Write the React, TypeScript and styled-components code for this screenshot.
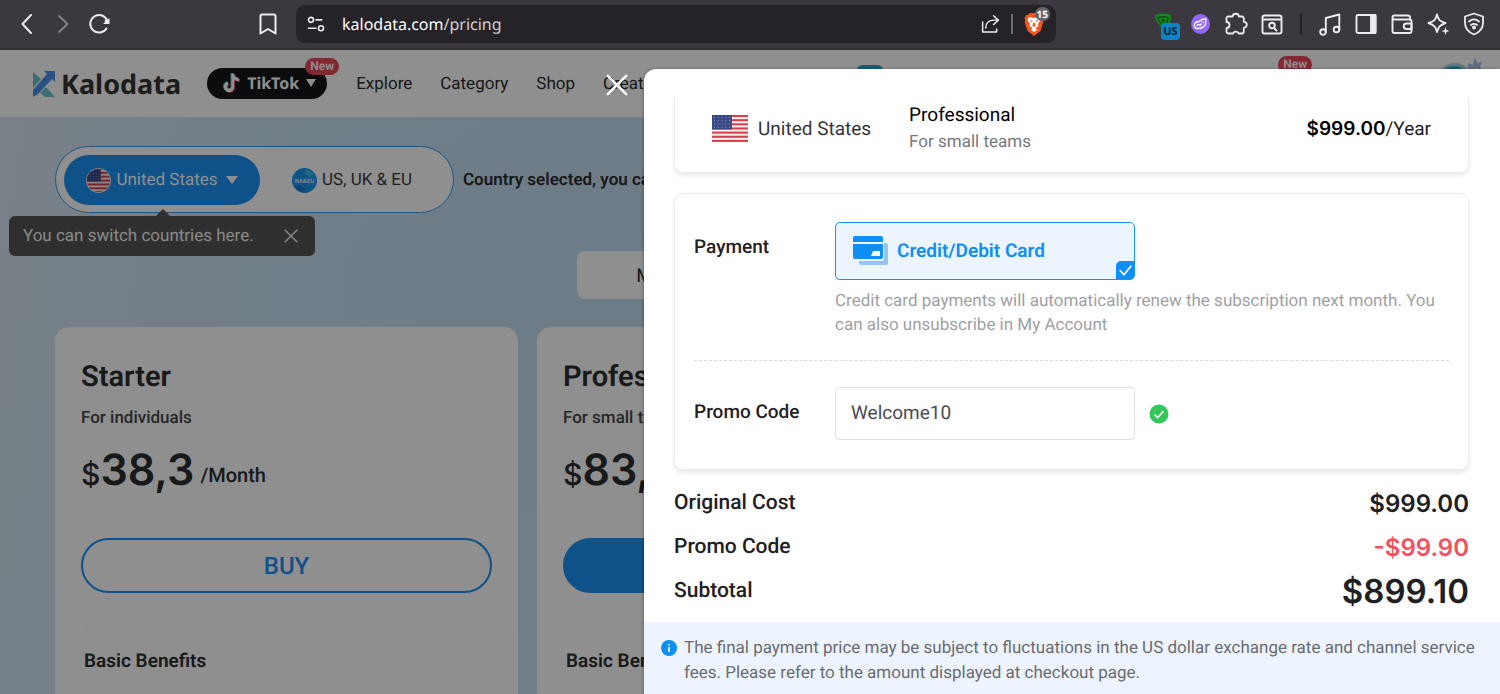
import React from 'react';
import styled, { createGlobalStyle } from 'styled-components';

const Global = createGlobalStyle`
  * { box-sizing: border-box; }
  body { margin: 0; background: #fff; font-family: Roboto, "Liberation Sans", sans-serif; color: #2b2d30; text-rendering: geometricPrecision; }
  button, input { font: inherit; color: inherit; text-rendering: inherit; }
  button { border: 0; padding: 0; background: none; cursor: pointer; }
  a { color: inherit; text-decoration: none; }
  h2, h3, p { margin: 0; }
  svg { display: block; flex: none; }
`;

const Screen = styled.div`
  display: flex;
  flex-direction: column;
  height: 100vh;
`;

/* ---------- browser bar ---------- */

const BrowserBar = styled.div`
  display: flex;
  flex: none;
  align-items: center;
  height: 50px;
  padding: 0 14px 0 16px;
  background: #3b393f;
  border-bottom: 2px solid #333136;
  color: #ececee;
`;

const IconButton = styled.button<{ $dim?: boolean }>`
  display: flex;
  align-items: center;
  justify-content: center;
  width: 24px;
  height: 24px;
  color: ${p => (p.$dim ? '#858388' : 'inherit')};
`;

const NavGroup = styled.div`
  display: flex;
  gap: 12px;
  flex: none;
  width: 240px;
`;

const AddressBar = styled.form`
  display: flex;
  align-items: center;
  width: 760px;
  height: 38px;
  margin-left: 16px;
  padding: 0 10px 0 8px;
  border-radius: 9px;
  background: #252328;
`;

const AddressText = styled.div`
  flex: 1;
  margin-left: 14px;
  font: 16px/24px "Noto Sans", sans-serif;
  color: #d2d1d4;
  b { font-weight: 400; color: #fff; }
`;

const BarRule = styled.span<{ $dark?: boolean }>`
  width: 2px;
  height: 20px;
  margin: 0 ${p => (p.$dark ? '4px' : '9px')};
  background: ${p => (p.$dark ? '#232126' : '#6f6d73')};
`;

const ExtensionGroup = styled.div`
  display: flex;
  align-items: center;
  gap: 12px;
  margin-left: auto;
`;

const Badged = styled.span`
  position: relative;
  display: flex;
`;

const ShieldCount = styled.span`
  position: absolute;
  top: -5px;
  right: -6px;
  padding: 0 2px;
  border-radius: 7px;
  background: #66646f;
  color: #fff;
  font: 700 10px/14px "Noto Sans", sans-serif;
`;

const RegionTag = styled.span`
  position: absolute;
  top: 12px;
  left: 7px;
  width: 19px;
  border-radius: 4px;
  background: #0a84c4;
  color: #10202c;
  text-align: center;
  font: 700 11px/17px "Noto Sans", sans-serif;
`;

/* ---------- page ---------- */

const Viewport = styled.div`
  position: relative;
  flex: 1;
  min-height: 0;
  overflow: hidden;
`;

const Page = styled.div`
  height: 100%;
  display: flex;
  flex-direction: column;
  background: radial-gradient(ellipse 700px 420px at 50% 40%, #c3dcf0, transparent), linear-gradient(100deg, #d7e6f0 0%, #cae2f4 20%, #c5e2f5 100%);
`;

const Header = styled.header`
  display: flex;
  flex: none;
  align-items: center;
  height: 67px;
  padding: 0 17px 0 32px;
  background: #fff;
  font-size: 17px;
`;

const Logo = styled.a`
  display: flex;
  align-items: center;
  gap: 5px;
  color: #333;
  font: 700 27px/40px "Noto Sans", sans-serif;
`;

const PlatformButton = styled.button`
  position: relative;
  display: flex;
  align-items: center;
  gap: 7px;
  width: 120px;
  height: 31px;
  margin-left: 26px;
  padding: 0 0 2px 15px;
  border-radius: 16px;
  background: #16171b;
  color: #fff;
  font: 700 16px/24px "Noto Sans", sans-serif;
`;

const NewBadge = styled.span`
  padding: 0 5px;
  border-radius: 9px;
  background: #e8485c;
  color: #fff;
  font: 600 12px/17px Roboto, sans-serif;
`;

const PlatformBadge = styled(NewBadge)`
  position: absolute;
  top: -10px;
  right: -12px;
`;

const NavLinks = styled.nav`
  display: flex;
  gap: 28px;
  margin-left: 29px;
`;

const HeaderEnd = styled.div`
  display: flex;
  align-items: flex-start;
  gap: 125px;
  align-self: flex-start;
  margin-left: auto;
  padding-top: 6px;
`;

const TopChip = styled.span`
  width: 28px;
  height: 14px;
  margin: 9px 269px 0 0;
  border-radius: 7px;
  background: #22a7d4;
`;

const Body = styled.div`
  flex: 1;
  display: flex;
  flex-direction: column;
  padding: 29px 54px 0 55px;
`;

const CountryRow = styled.div`
  display: flex;
  align-items: center;
  gap: 9px;
  font-size: 17px;
`;

const CountryTabs = styled.div`
  position: relative;
  display: flex;
  width: 399px;
  height: 67px;
  padding: 8px;
  border: 1px solid #2f9bf5;
  border-radius: 34px;
  background: #fff;
`;

const CountryTab = styled.button<{ $active?: boolean }>`
  display: flex;
  align-items: center;
  justify-content: center;
  gap: 5px;
  width: ${p => (p.$active ? '196px' : '184px')};
  height: 50px;
  border-radius: 25px;
  background: ${p => (p.$active ? '#1c92f5' : 'transparent')};
  color: ${p => (p.$active ? '#fff' : '#3c3d40')};
`;

const TabCaret = styled.span`
  margin-left: 3px;
`;

const CountryNote = styled.strong`
  font-weight: 600;
  white-space: nowrap;
`;

const Tooltip = styled.div`
  position: absolute;
  top: 69px;
  left: -47px;
  display: flex;
  align-items: center;
  justify-content: space-between;
  width: 306px;
  height: 40px;
  padding: 0 12px 0 14px;
  border-radius: 6px;
  background: #555;
  color: #f3f3f3;
  &::before {
    content: '';
    position: absolute;
    top: -7px;
    left: 147px;
    border: solid transparent;
    border-width: 0 7px 7px;
    border-bottom-color: #555;
  }
`;

const PeriodRow = styled.div`
  display: flex;
  justify-content: center;
  margin-top: 38px;
`;

const PeriodTab = styled.button`
  width: 174px;
  height: 48px;
  border-radius: 8px;
  background: #fff;
  font-size: 19px;
`;

const Plans = styled.div`
  flex: 1;
  display: grid;
  grid-template-columns: repeat(3, 463px);
  gap: 19px;
  margin-top: 28px;
`;

const PlanCard = styled.section`
  padding: 35px 26px 0;
  border-radius: 14px 14px 0 0;
  background: #fff;
  display: flex;
  flex-direction: column;
`;

const PlanName = styled.h2`
  font-size: 29px;
  line-height: 30px;
  font-weight: 600;
`;

const PlanFor = styled.p`
  margin-top: 14px;
  font-size: 17px;
  line-height: 24px;
  font-weight: 500;
  color: #45464a;
`;

const PlanPrice = styled.p`
  display: flex;
  align-items: center;
  gap: 6px;
  height: 60px;
  margin-top: 12px;
`;

const Amount = styled.span`
  font: 600 43px/60px Inter, sans-serif;
`;

const Currency = styled.span`
  font-size: 30px;
  font-weight: 500;
`;

const Per = styled.span`
  padding-top: 6px;
  font-size: 20px;
  font-weight: 500;
`;

const BuyButton = styled.button<{ $filled?: boolean }>`
  height: 55px;
  margin-top: 36px;
  border: 2px solid #1c92f5;
  border-radius: 28px;
  background: ${p => (p.$filled ? '#1c92f5' : 'transparent')};
  color: ${p => (p.$filled ? '#fff' : '#1c92f5')};
  font-size: 24px;
  font-weight: 500;
`;

const Benefits = styled.h3`
  margin: 36px 3px 0;
  padding-top: 20px;
  border-top: 1px solid #f3f3f3;
  font-size: 19px;
  line-height: 22px;
  font-weight: 600;
`;

/* ---------- drawer ---------- */

const Mask = styled.div`
  position: absolute;
  inset: 0;
  background: rgba(0, 0, 0, 0.44);
`;

const Drawer = styled.aside`
  position: absolute;
  top: 19px;
  right: 0;
  bottom: 0;
  width: 856px;
  display: flex;
  flex-direction: column;
  padding-top: 28px;
  border-top-left-radius: 12px;
  background: #fff;
  box-shadow: -1px 0 3px rgba(0, 0, 0, 0.25);
  color: #1f2023;
`;

const CloseButton = styled.button`
  position: absolute;
  top: 5px;
  left: -38px;
  color: #fff;
`;

const DrawerBody = styled.div`
  flex: 1;
  padding: 0 31px 0 30px;
`;

const Card = styled.section`
  border: 1px solid #ededee;
  border-radius: 9px;
  box-shadow: 0 3px 5px rgba(0, 0, 0, 0.09);
`;

const SummaryCard = styled(Card)`
  display: flex;
  align-items: center;
  height: 76px;
  padding: 0 37px 12px;
  border-top: 0;
  border-radius: 0 0 9px 9px;
  font-size: 19px;
`;

const SummaryCountry = styled.span`
  margin: 0 38px 0 10px;
  color: #35363a;
`;

const SummaryPlan = styled.div`
  flex: 1;
  line-height: 26px;
  color: #000;
  p { font-size: 17px; line-height: 28px; color: #77787b; }
`;

const SummaryPrice = styled.div`
  b { font: 600 19px/26px Inter, sans-serif; color: #000; }
`;

const PaymentCard = styled(Card)`
  margin-top: 20px;
  padding: 28px 19px 29px;
`;

const FieldRow = styled.div<{ $divided?: boolean }>`
  display: grid;
  grid-template-columns: 141px 1fr;
  font-size: 19px;
  ${p => p.$divided && 'padding-bottom: 23px; margin-bottom: 26px; border-bottom: 1px dashed #d9d9d9;'}
`;

const FieldLabel = styled.label`
  line-height: 50px;
  font-weight: 500;
`;

const MethodButton = styled.button`
  position: relative;
  display: flex;
  align-items: center;
  gap: 8px;
  width: 300px;
  height: 58px;
  padding: 0 0 2px 17px;
  border: 1px solid #1592f5;
  border-radius: 5px;
  background: #ecf4fd;
  color: #0d8ff5;
  font-weight: 600;
`;

const MethodTick = styled.span`
  position: absolute;
  right: 0;
  bottom: 0;
  display: flex;
  padding: 3px 2px 2px 3px;
  border-radius: 5px 0 3px 0;
  background: #0d8ff5;
  color: #fff;
`;

const Hint = styled.p`
  margin-top: 9px;
  color: #a0a1a3;
  font-size: 17px;
  line-height: 24px;
`;

const PromoField = styled.div`
  display: flex;
  align-items: center;
  gap: 14px;
`;

const PromoInput = styled.input`
  width: 300px;
  height: 53px;
  padding: 0 15px 2px;
  border: 1px solid #e0e0e2;
  border-radius: 4px;
  outline: 0;
  background: #fff;
  color: #4b4c50;
`;

const Totals = styled.dl`
  margin: 11px 0 0;
`;

const TotalRow = styled.div`
  display: flex;
  align-items: center;
  justify-content: space-between;
  height: 44px;
`;

const TotalName = styled.dt`
  font-size: 21px;
  font-weight: 500;
`;

const TotalValue = styled.dd<{ $tone?: 'discount' | 'total' }>`
  margin: 0;
  font-family: Inter, sans-serif;
  font-size: ${p => (p.$tone === 'total' ? '33px' : '24px')};
  font-weight: 600;
  color: ${p => (p.$tone === 'discount' ? '#f4505f' : 'inherit')};
`;

const Notice = styled.footer`
  display: flex;
  gap: 7px;
  height: 72px;
  padding: 14px 22px 8px 17px;
  background: #edf4fd;
  color: #6a6c70;
  font-size: 17px;
  line-height: 25px;
  svg { margin-top: 4px; }
`;

/* ---------- drawings ---------- */

const Icon = ({ size = 24, w = 2, children }: { size?: number; w?: number; children: React.ReactNode }) => (
  <svg width={size} height={size} viewBox="0 0 24 24" fill="none" stroke="currentColor" strokeWidth={w} strokeLinecap="round" strokeLinejoin="round">
    {children}
  </svg>
);

const FlagArt = () => (
  <>
    <rect width="38" height="28" fill="#fbf0f0" />
    {[0, 1, 2, 3, 4, 5, 6].map(i => (
      <rect key={i} y={i * 4.3} width="38" height="2.15" fill="#d2424e" />
    ))}
    <rect width="21" height="15" fill="#3a4a86" />
    {[0, 1, 2, 3].map(r => [0, 1, 2, 3, 4].map(c => (
      <circle key={`${r}${c}`} cx={2.6 + c * 4} cy={2.4 + r * 3.4} r="0.6" fill="#8f9ac4" />
    )))}
  </>
);

const Flag = () => (
  <svg width="36" height="27" viewBox="0 0 38 28" preserveAspectRatio="none" aria-hidden="true">
    <FlagArt />
  </svg>
);

const RoundFlag = () => (
  <svg width="25" height="25" viewBox="0 0 25 25" aria-hidden="true">
    <clipPath id="round"><circle cx="12.5" cy="12.5" r="11.6" /></clipPath>
    <circle cx="12.5" cy="12.5" r="12.5" fill="#e8e4e6" />
    <g clipPath="url(#round)"><g transform="scale(0.7 0.9)"><FlagArt /></g></g>
  </svg>
);

const Globe = () => (
  <svg width="25" height="25" viewBox="0 0 25 25" aria-hidden="true">
    <circle cx="12.5" cy="12.5" r="12.5" fill="#1e95ee" />
    <path d="M13 2c4-1 8 2 9 5l-4 2-5-3z" fill="#35bfe0" />
    <path d="M3 18l6-1 4 4-3 3C7 23 4 21 3 18z" fill="#1878cc" />
    <text x="12.5" y="15" fontSize="6" fontWeight="700" textAnchor="middle" fill="#d6ecff">NA&amp;EU</text>
  </svg>
);

const KaloMark = () => (
  <svg width="24" height="26" viewBox="0 0 24 26" aria-hidden="true">
    <path d="M1 1l8 7-8 9z" fill="#6cc3cc" />
    <path d="M14 16l9 10H13l-5-4z" fill="#6cc3cc" />
    <path d="M12 0h11v11l-3-3L6 23l-5 3v-7L15 3z" fill="#4a90e8" />
  </svg>
);

const TikTokMark = () => {
  const note = 'M9 0h3c.3 2.700 2 4.500 5 4.700v3.300c-2 0-3.600-.6-5-1.500v7.500a5.500 5.500 0 1 1-6.500-5.400v3.400a2.200 2.200 0 1 0 3.500 1.800z';
  return (
    <svg width="18" height="20" viewBox="0 0 19 21" aria-hidden="true">
      <path d={note} fill="#2de0dc" />
      <path d={note} fill="#f5305a" transform="translate(1.800 1.400)" />
      <path d={note} fill="#fff" transform="translate(0.900 0.700)" />
    </svg>
  );
};

const Caret = ({ w = 10 }: { w?: number }) => (
  <svg width={w} height="8" viewBox="0 0 10 8" preserveAspectRatio="none" aria-hidden="true"><path d="M0 0h10L5 8z" fill="currentColor" /></svg>
);

const CreditCardArt = () => (
  <svg width="36" height="29" viewBox="0 0 36 29" aria-hidden="true">
    <rect x="6" y="7" width="29" height="22" rx="2" fill="#95c3f2" />
    <rect width="31" height="25" rx="2" fill="#ecf4fd" />
    <path d="M2 0h26a2 2 0 0 1 2 2v4H0V2a2 2 0 0 1 2-2zM0 8h30v13a2 2 0 0 1-2 2H2a2 2 0 0 1-2-2z" fill="#0d8ff5" />
    <path d="M20 15h7v5h-9z" fill="#fff" />
  </svg>
);

const BraveLion = () => (
  <svg width="20" height="24" viewBox="0 0 20 24" aria-hidden="true">
    <path d="M6 1h8l2 2 2 0 1.500 3-.7 2 .5 2-2.800 9L10 24l-6.500-5L.7 10l.5-2L.5 6 2 3h2z" fill="#f1561d" />
    <path d="M5 5l5 1 5-1 1.500 3-2.500 4 .5 2-3 2 1.500 2L10 20l-3-2 1.500-2-3-2 .5-2-2.500-4z" fill="#fff" />
    <path d="M6 8l3 1-2 1zM14 8l-3 1 2 1zM9 11h2l.5 3-1.500 1-1.500-1z" fill="#f1561d" />
  </svg>
);

const GreenShield = () => (
  <svg width="20" height="26" viewBox="0 0 20 26" aria-hidden="true">
    <path d="M1 4q8-3 16 0 .5 9-6 15Q2 13 1 4z" fill="#128a1c" />
    <path d="M4 6.500q5-1.500 10 0 0 5-4 9Q5 12 4 6.500z" fill="none" stroke="#0b4a12" strokeWidth="1.300" />
    <path d="M7 9l4-1-1 4z" fill="#0b3c10" />
  </svg>
);

const PurpleOrb = () => (
  <svg width="19" height="20" viewBox="0 0 19 20" aria-hidden="true">
    <ellipse cx="9.500" cy="10" rx="9.500" ry="10" fill="#9468f6" />
    <g fill="none" stroke="#fff" strokeWidth="1.300" strokeLinejoin="round" strokeLinecap="round">
      <path d="M4 9c1-1.500 4-1 5-2s3-2.500 6-2c0 2-.5 3-.5 5-1 3-4 4.500-8 4.500C3.500 14.500 2.500 12 4 9z" />
      <path d="M6 11.500c.5-1.500 2-1.500 2.500-.5s1.500 0 2-1.500M12 8h.5" />
    </g>
  </svg>
);

const AvatarArt = () => (
  <svg width="46" height="30" viewBox="0 0 46 30" aria-hidden="true">
    <path d="M31 14l0-7 5 2 2-8 2 6 5-1-2 5 3 4z" fill="#aebfdf" />
    <circle cx="18" cy="25" r="18" fill="#b3cfe4" />
    <circle cx="17" cy="25" r="15" fill="#1fb3c8" />
  </svg>
);

const plans = [
  { name: 'Starter', target: 'For individuals', price: '38,3' },
  { name: 'Professional', target: 'For small teams', price: '83,2', filled: true },
];

export default function App() {
  return (
    <Screen>
      <Global />
      <BrowserBar>
        <NavGroup>
          <IconButton aria-label="Back"><Icon><path d="M15 3L6.500 12 15 21" /></Icon></IconButton>
          <IconButton aria-label="Forward" $dim><Icon w={1.800}><path d="M7 4l8.500 8L7 20" /></Icon></IconButton>
          <IconButton aria-label="Reload">
            <Icon><path d="M18.500 16.500A8.800 8.800 0 1 1 19 8" /><path d="M15 12h6.500V6z" fill="currentColor" stroke="none" /><circle cx="18.800" cy="9.500" r="2.200" fill="currentColor" stroke="none" /></Icon>
          </IconButton>
        </NavGroup>
        <IconButton aria-label="Bookmark"><Icon><path d="M6 2.500h12a1.500 1.500 0 0 1 1.500 1.500v17.500l-7.500-4.500-7.500 4.500V4A1.500 1.500 0 0 1 6 2.500z" /></Icon></IconButton>
        <AddressBar>
          <IconButton type="button" aria-label="Site settings">
            <Icon size={20} w={1.900}><circle cx="6" cy="7" r="3" /><path d="M12 7h7M3 17h9" /><circle cx="18" cy="17" r="3" /></Icon>
          </IconButton>
          <AddressText><b>kalodata.com</b>/pricing</AddressText>
          <IconButton type="button" aria-label="Share">
            <Icon size={21} w={1.700}><path d="M3 9v11.500h16V17M6.500 16c0-6 4-9 10-9h4M15.500 2l5.500 5-5.500 5" /></Icon>
          </IconButton>
          <BarRule />
          <IconButton type="button" aria-label="Shields">
            <Badged><BraveLion /><ShieldCount>15</ShieldCount></Badged>
          </IconButton>
        </AddressBar>
        <ExtensionGroup>
          <IconButton aria-label="VPN extension"><Badged><GreenShield /><RegionTag>US</RegionTag></Badged></IconButton>
          <IconButton aria-label="Orb extension"><PurpleOrb /></IconButton>
          <IconButton aria-label="Extensions">
            <Icon w={1.800}><path d="M4.500 4.500H8.500a3.300 3.300 0 0 1 6.500 0H18a1.800 1.800 0 0 1 1.800 1.800v3.500a3 3 0 0 1 0 6v3.700a2 2 0 0 1-2 2h-3.300a2.900 2.900 0 0 0-5.400 0H4.500a2 2 0 0 1-2-2v-3.500a3 3 0 0 0 0-6V6.300A1.800 1.800 0 0 1 4.500 4.500z" /></Icon>
          </IconButton>
          <IconButton aria-label="Search tabs">
            <Icon w={1.900}><rect x="2.500" y="3.500" width="19" height="18" rx="2" /><path d="M3 7.500h18M14 16l2.500 2.500" /><circle cx="12" cy="13.500" r="2.800" /></Icon>
          </IconButton>
          <BarRule $dark />
          <IconButton aria-label="Playlist">
            <Icon w={1.900}><circle cx="5" cy="20" r="2.800" /><circle cx="18.500" cy="17.500" r="2.800" /><path d="M7.800 20V6l13.500-3.500v15" /></Icon>
          </IconButton>
          <IconButton aria-label="Sidebar">
            <Icon w={1.900}><rect x="2.500" y="3" width="19" height="18" rx="1.500" /><path d="M17 3h4.500v18H17z" fill="currentColor" /></Icon>
          </IconButton>
          <IconButton aria-label="Wallet">
            <Icon w={1.900}><path d="M20 7V5.500a2 2 0 0 0-2-2H4.500a2 2 0 0 0 0 4H19.500a2 2 0 0 1 2 2V19a2 2 0 0 1-2 2H4.500a2 2 0 0 1-2-2V5.500" /><path d="M21.500 11.500h-5a2.700 2.700 0 0 0 0 5.500h5z" /></Icon>
          </IconButton>
          <IconButton aria-label="Assistant">
            <Icon w={1.900}><path d="M11 2.500c1 5 3 7 8.500 8.500-3 1-5 2-6.500 4l-2 5c-1-5-3-7-8.500-9 5.500-1.500 7.500-3.500 8.500-8.500z" /><path d="M19.500 15l1 3 3 1-3 1-1 3-1-3-3-1 3-1z" fill="currentColor" stroke="none" /></Icon>
          </IconButton>
          <IconButton aria-label="Brave VPN">
            <Icon w={1.800}><path d="M12 1.500l9 3v6.500c0 6-4 9.500-9 11.500-5-2-9-5.500-9-11.500V4.500z" /><path d="M7 9.500c3-2.500 7-2.500 10 0M9 13c2-1.500 4-1.500 6 0" /><circle cx="12" cy="15.500" r="1" fill="currentColor" /></Icon>
          </IconButton>
        </ExtensionGroup>
      </BrowserBar>

      <Viewport>
        <Page>
          <Header>
            <Logo href="#"><KaloMark />Kalodata</Logo>
            <PlatformButton>
              <TikTokMark />TikTok<Caret />
              <PlatformBadge>New</PlatformBadge>
            </PlatformButton>
            <NavLinks>
              <a href="#">Explore</a>
              <a href="#">Category</a>
              <a href="#">Shop</a>
              <a href="#">Creator</a>
            </NavLinks>
            <HeaderEnd>
              <TopChip />
              <NewBadge>New</NewBadge>
              <AvatarArt />
            </HeaderEnd>
          </Header>
          <Body>
            <CountryRow>
              <CountryTabs>
                <CountryTab $active><RoundFlag />United States<TabCaret><Caret w={12} /></TabCaret></CountryTab>
                <CountryTab><Globe />US, UK &amp; EU</CountryTab>
                <Tooltip role="tooltip">
                  You can switch countries here.
                  <IconButton aria-label="Dismiss"><Icon size={20} w={1.800}><path d="M5 5l14 14M19 5L5 19" /></Icon></IconButton>
                </Tooltip>
              </CountryTabs>
              <CountryNote>Country selected, you can</CountryNote>
            </CountryRow>
            <PeriodRow>
              <PeriodTab>Month</PeriodTab>
              <PeriodTab>Year</PeriodTab>
            </PeriodRow>
            <Plans>
              {plans.map(p => (
                <PlanCard key={p.name}>
                  <PlanName>{p.name}</PlanName>
                  <PlanFor>{p.target}</PlanFor>
                  <PlanPrice><Amount><Currency>$</Currency>{p.price}</Amount><Per>/Month</Per></PlanPrice>
                  <BuyButton $filled={p.filled}>BUY</BuyButton>
                  <Benefits>Basic Benefits</Benefits>
                </PlanCard>
              ))}
            </Plans>
          </Body>
        </Page>

        <Mask />
        <Drawer>
          <CloseButton aria-label="Close"><Icon size={22} w={2.600}><path d="M2 2l20 20M22 2L2 22" /></Icon></CloseButton>
          <DrawerBody>
            <SummaryCard>
              <Flag />
              <SummaryCountry>United States</SummaryCountry>
              <SummaryPlan>Professional<p>For small teams</p></SummaryPlan>
              <SummaryPrice><b>$999.00</b>/Year</SummaryPrice>
            </SummaryCard>
            <PaymentCard>
              <FieldRow $divided>
                <FieldLabel htmlFor="method">Payment</FieldLabel>
                <div>
                  <MethodButton id="method" aria-pressed="true">
                    <CreditCardArt />Credit/Debit Card
                    <MethodTick><Icon size={13} w={3}><path d="M2 12l7 8L22 4" /></Icon></MethodTick>
                  </MethodButton>
                  <Hint>Credit card payments will automatically renew the subscription next month. You can also unsubscribe in My Account</Hint>
                </div>
              </FieldRow>
              <FieldRow>
                <FieldLabel htmlFor="promo">Promo Code</FieldLabel>
                <PromoField>
                  <PromoInput id="promo" defaultValue="Welcome10" />
                  <svg width="20" height="20" viewBox="0 0 20 20" aria-hidden="true">
                    <circle cx="10" cy="10" r="9.500" fill="#34c759" />
                    <path d="M5.500 10.500l3.200 3.200L14.500 7" fill="none" stroke="#fff" strokeWidth="1.600" />
                  </svg>
                </PromoField>
              </FieldRow>
            </PaymentCard>
            <Totals>
              <TotalRow><TotalName>Original Cost</TotalName><TotalValue>$999.00</TotalValue></TotalRow>
              <TotalRow><TotalName>Promo Code</TotalName><TotalValue $tone="discount">-$99.90</TotalValue></TotalRow>
              <TotalRow><TotalName>Subtotal</TotalName><TotalValue $tone="total">$899.10</TotalValue></TotalRow>
            </Totals>
          </DrawerBody>
          <Notice>
            <svg width="16" height="16" viewBox="0 0 16 16" aria-hidden="true">
              <circle cx="8" cy="8" r="8" fill="#0d8ff5" />
              <path d="M8 4v1.500M8 7v5" stroke="#fff" strokeWidth="1.600" />
            </svg>
            <p>The final payment price may be subject to fluctuations in the US dollar exchange rate and channel service fees. Please refer to the amount displayed at checkout page.</p>
          </Notice>
        </Drawer>
      </Viewport>
    </Screen>
  );
}
